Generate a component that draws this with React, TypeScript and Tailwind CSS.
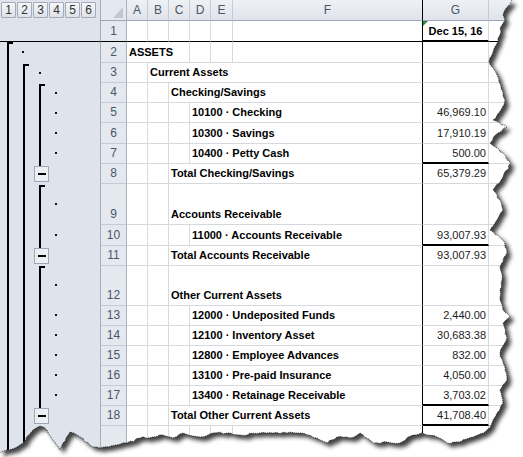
import React from "react";

type RowDef = {
  n: number;
  h: string;
  start?: "A" | "B" | "C" | "D";
  text?: string;
  g?: string;
  thick?: boolean;
  hideNum?: boolean;
};

const ROWS: RowDef[] = [
  { n: 2, h: "h-[21px]", start: "A", text: "ASSETS" },
  { n: 3, h: "h-[20px]", start: "B", text: "Current Assets" },
  { n: 4, h: "h-[20px]", start: "C", text: "Checking/Savings" },
  { n: 5, h: "h-[20px]", start: "D", text: "10100 · Checking", g: "46,969.10" },
  { n: 6, h: "h-[21px]", start: "D", text: "10300 · Savings", g: "17,910.19" },
  { n: 7, h: "h-[20px]", start: "D", text: "10400 · Petty Cash", g: "500.00", thick: true },
  { n: 8, h: "h-[20px]", start: "C", text: "Total Checking/Savings", g: "65,379.29" },
  { n: 9, h: "h-[41px]", start: "C", text: "Accounts Receivable" },
  { n: 10, h: "h-[21px]", start: "D", text: "11000 · Accounts Receivable", g: "93,007.93", thick: true },
  { n: 11, h: "h-[20px]", start: "C", text: "Total Accounts Receivable", g: "93,007.93" },
  { n: 12, h: "h-[40px]", start: "C", text: "Other Current Assets" },
  { n: 13, h: "h-[20px]", start: "D", text: "12000 · Undeposited Funds", g: "2,440.00" },
  { n: 14, h: "h-[20px]", start: "D", text: "12100 · Inventory Asset", g: "30,683.38" },
  { n: 15, h: "h-[20px]", start: "D", text: "12800 · Employee Advances", g: "832.00" },
  { n: 16, h: "h-[20px]", start: "D", text: "13100 · Pre-paid Insurance", g: "4,050.00" },
  { n: 17, h: "h-[20px]", start: "D", text: "13400 · Retainage Receivable", g: "3,703.02", thick: true },
  { n: 18, h: "h-[20px]", start: "C", text: "Total Other Current Assets", g: "41,708.40", thick: true },
  { n: 19, h: "h-[41px]", hideNum: true },
];

const ORDER = ["A", "B", "C", "D", "E", "F"] as const;
const COLW: Record<string, string> = {
  A: "w-[21px]",
  B: "w-[21px]",
  C: "w-[21px]",
  D: "w-[21px]",
  E: "w-[22px]",
  F: "w-[190px]",
};
const SPANW: Record<string, string> = {
  A: "w-[63px]",
  B: "w-[275px]",
  C: "w-[254px]",
  D: "w-[233px]",
};
const SPANEND: Record<string, string> = { A: "C", B: "F", C: "F", D: "F" };

function RowHeader({ n, last, hide }: { n: number; last?: boolean; hide?: boolean }) {
  return (
    <div
      className={`w-[26px] shrink-0 bg-[#e4e8ef] border-r border-r-[#aab2be] border-b ${
        last ? "border-b-black" : "border-b-[#c5cbd4]"
      } flex items-end justify-center pb-[3px] text-[12px] leading-[13px] text-[#4a566a]`}
    >
      {hide ? null : n}
    </div>
  );
}

function DataRow({ r }: { r: RowDef }) {
  const cells: React.ReactNode[] = [];
  let i = 0;
  while (i < ORDER.length) {
    const c = ORDER[i];
    if (r.start === c && r.text) {
      const end = SPANEND[c];
      const endIdx = ORDER.indexOf(end as (typeof ORDER)[number]);
      cells.push(
        <div
          key={c}
          className={`${SPANW[c]} shrink-0 border-b border-r border-b-[#d5d9e0] ${
            end === "F" ? "border-r-black" : "border-r-[#d5d9e0]"
          } flex items-end pl-[2px] pb-[3px]`}
        >
          <span className="whitespace-nowrap text-[11px] leading-[13px] font-bold text-black">
            {r.text}
          </span>
        </div>
      );
      i = endIdx + 1;
    } else {
      cells.push(
        <div
          key={c}
          className={`${COLW[c]} shrink-0 border-b border-r border-b-[#d5d9e0] ${
            c === "F" ? "border-r-black" : "border-r-[#d5d9e0]"
          }`}
        />
      );
      i++;
    }
  }
  return (
    <div className={`flex shrink-0 ${r.h}`}>
      <RowHeader n={r.n} hide={r.hideNum} />
      {cells}
      <div
        className={`w-[66px] shrink-0 border-r border-r-[#d5d9e0] flex items-end justify-end pr-[2px] ${
          r.thick ? "border-b-2 border-b-black pb-[2px]" : "border-b border-b-[#d5d9e0] pb-[3px]"
        }`}
      >
        {r.g && <span className="whitespace-nowrap text-[11px] leading-[13px] text-[#1c1c24]">{r.g}</span>}
      </div>
      <div className="flex-1 border-b border-b-[#d5d9e0]" />
    </div>
  );
}

function ColHeader({ w, label, right }: { w: string; label: string; right?: string }) {
  return (
    <div
      className={`${w} shrink-0 border-r ${right ?? "border-r-[#c6ccd5]"} border-b border-b-[#9ea7b4] bg-gradient-to-b from-[#eef1f5] to-[#e0e4eb] flex items-end justify-center pb-[3px] text-[12px] leading-[13px] text-[#4a566a]`}
    >
      {label}
    </div>
  );
}

function LevelButton({ n }: { n: number }) {
  return (
    <div className="w-[15px] h-[16px] shrink-0 border border-[#a3abb8] rounded-[1px] bg-gradient-to-b from-[#f6f7fa] to-[#dde2ea] flex items-center justify-center text-[12px] leading-[13px] text-[#333]">
      {n}
    </div>
  );
}

function OutlineSvg() {
  const dots: [number, number][] = [
    [23, 52],
    [40, 73],
    [56, 93],
    [56, 113],
    [56, 133],
    [56, 153],
    [56, 204],
    [56, 235],
    [56, 285],
    [56, 315],
    [56, 335],
    [56, 355],
    [56, 375],
    [56, 395],
  ];
  const minus = [166, 248, 408];
  return (
    <svg width="100" height="415" viewBox="0 42 100 415" className="block">
      <rect x="7" y="42" width="2" height="420" fill="#000" />
      <rect x="7" y="42" width="6" height="2" fill="#000" />
      <rect x="23" y="64" width="2" height="400" fill="#000" />
      <rect x="23" y="64" width="6" height="2" fill="#000" />
      <rect x="39" y="84" width="2" height="82" fill="#000" />
      <rect x="39" y="84" width="6" height="2" fill="#000" />
      <rect x="39" y="185" width="2" height="63" fill="#000" />
      <rect x="39" y="185" width="6" height="2" fill="#000" />
      <rect x="39" y="266" width="2" height="142" fill="#000" />
      <rect x="39" y="266" width="6" height="2" fill="#000" />
      {dots.map(([x, y], i) => (
        <rect key={i} x={x - 1} y={y - 1} width="2" height="2" fill="#111" />
      ))}
      {minus.map((y, i) => (
        <g key={i}>
          <rect x="34.5" y={y + 0.5} width="14" height="15" fill="#eceff4" stroke="#9ea7b5" strokeWidth="1" />
          <rect x="38" y={y + 7} width="8" height="2" fill="#000" />
        </g>
      ))}
    </svg>
  );
}

const EDGE: [number, number][] = [
  [512, 0], [507, 7], [503, 15], [505, 20], [502, 25], [498, 38], [496, 45], [492, 55], [489, 62], [493, 68],
  [497, 75], [499, 82], [503, 92], [505, 100], [502, 108], [497, 115], [493, 120],
  [507, 127], [498, 133], [490, 143], [503, 153], [511, 163], [503, 177], [493, 190], [500, 200], [503, 210],
  [497, 220], [490, 230], [503, 240], [507, 253], [500, 267], [502, 280], [500, 290], [500, 300], [503, 310],
  [510, 317], [503, 323], [507, 337], [500, 353], [505, 367], [507, 380], [500, 390], [503, 403], [497, 413],
  [492, 423], [487, 430], [480, 434], [473, 437],
  [457, 442], [447, 443], [437, 437], [427, 435], [422, 433], [413, 435], [400, 443], [387, 442], [373, 443],
  [360, 433], [350, 438], [337, 437], [327, 443], [317, 438], [300, 433], [287, 433], [273, 433], [260, 433],
  [240, 435], [227, 433], [213, 433], [200, 437], [183, 433], [173, 438], [163, 435], [153, 437], [140, 438],
  [127, 443], [100, 448], [93, 447], [80, 437], [70, 432], [63, 443], [60, 450], [53, 440], [47, 430],
  [40, 426], [33, 430], [23, 443], [17, 447], [7, 450], [0, 453],
];

function rough(pts: [number, number][]) {
  let s = 12345;
  const rnd = () => {
    s = (s * 16807) % 2147483647;
    return s / 2147483647;
  };
  const out: [number, number][] = [];
  for (let i = 0; i < pts.length; i++) {
    const [x, y] = pts[i];
    out.push([x, y]);
    if (i < pts.length - 1) {
      const [x2, y2] = pts[i + 1];
      const dx = x2 - x;
      const dy = y2 - y;
      const len = Math.hypot(dx, dy) || 1;
      const nx = -dy / len;
      const ny = dx / len;
      const k = Math.max(1, Math.floor(len / 3));
      for (let j = 1; j < k; j++) {
        const t = j / k;
        const o = (rnd() - 0.5) * 2;
        out.push([x + dx * t + nx * o, y + dy * t + ny * o]);
      }
    }
  }
  return out;
}

function TornEdge() {
  const pts = rough(EDGE);
  const edge = "M" + pts.map(([x, y]) => `${x.toFixed(2)},${y.toFixed(2)}`).join(" L");
  const paper = "M0,0 L" + pts.map(([x, y]) => `${x.toFixed(2)},${y.toFixed(2)}`).join(" L") + " Z";
  const outside = "M0,0 H523 V457 H0 Z " + paper;
  return (
    <svg className="absolute inset-0 pointer-events-none" width="523" height="457" viewBox="0 0 523 457">
      <defs>
        <clipPath id="outsideClip">
          <path d={outside} clipRule="evenodd" />
        </clipPath>
        <filter id="shadowBlur" x="-5%" y="-5%" width="115%" height="115%">
          <feGaussianBlur stdDeviation="2.2" />
        </filter>
      </defs>
      <path d={outside} fill="#fff" fillRule="evenodd" />
      <g clipPath="url(#outsideClip)">
        <path d={paper} transform="translate(4,4)" fill="#2a2a2a" opacity="0.9" filter="url(#shadowBlur)" />
      </g>
      <path d={edge} fill="none" stroke="#111" strokeWidth="0.9" strokeDasharray="1 1" opacity="0.8" />
    </svg>
  );
}

export default function App() {
  return (
    <div className="relative w-[523px] h-[457px] overflow-hidden bg-white font-['Liberation_Sans',Arial,sans-serif]">
      <div className="flex h-[21px]">
        <div className="w-[101px] shrink-0 bg-[#dfe3ec] border-r border-r-[#a4acb8] flex items-start pt-[2px] pl-[1px] gap-[1px]">
          {[1, 2, 3, 4, 5, 6].map((n) => (
            <LevelButton key={n} n={n} />
          ))}
        </div>
        <div className="w-[26px] shrink-0 bg-[#e4e8ef] border-r border-r-[#aab2be] border-b border-b-[#9ea7b4] flex items-end justify-end pr-[3px] pb-[2px]">
          <svg width="10" height="11" viewBox="0 0 10 11">
            <polygon points="10,0 10,11 0,11" fill="#c3c8d0" />
          </svg>
        </div>
        <ColHeader w="w-[21px]" label="A" />
        <ColHeader w="w-[21px]" label="B" />
        <ColHeader w="w-[21px]" label="C" />
        <ColHeader w="w-[21px]" label="D" />
        <ColHeader w="w-[22px]" label="E" />
        <ColHeader w="w-[190px]" label="F" right="border-r-black" />
        <ColHeader w="w-[66px]" label="G" />
        <div className="flex-1 border-b border-b-[#9ea7b4] bg-gradient-to-b from-[#eef1f5] to-[#e0e4eb]" />
      </div>

      <div className="flex h-[21px]">
        <div className="w-[101px] shrink-0 bg-[#dfe3ec] border-r border-r-[#a4acb8] border-b border-b-black" />
        <RowHeader n={1} last />
        {ORDER.map((c) => (
          <div
            key={c}
            className={`${COLW[c]} shrink-0 border-r ${c === "F" ? "border-r-black" : "border-r-[#d5d9e0]"} border-b border-b-black`}
          />
        ))}
        <div className="relative w-[66px] shrink-0 border-r border-r-[#d5d9e0] border-b-2 border-b-black flex items-end justify-center pb-[2px]">
          <span className="absolute left-0 top-0 w-0 h-0 border-t-[5px] border-t-[#2e8b3a] border-r-[5px] border-r-transparent" />
          <span className="whitespace-nowrap text-[11px] leading-[13px] font-bold text-black">Dec 15, 16</span>
        </div>
        <div className="flex-1 border-b border-b-black" />
      </div>

      <div className="flex">
        <div className="w-[101px] shrink-0 bg-[#dfe3ec] border-r border-r-[#a4acb8]">
          <OutlineSvg />
        </div>
        <div className="flex-1 flex flex-col">
          {ROWS.map((r) => (
            <DataRow key={r.n} r={r} />
          ))}
        </div>
      </div>

      <TornEdge />
    </div>
  );
}
